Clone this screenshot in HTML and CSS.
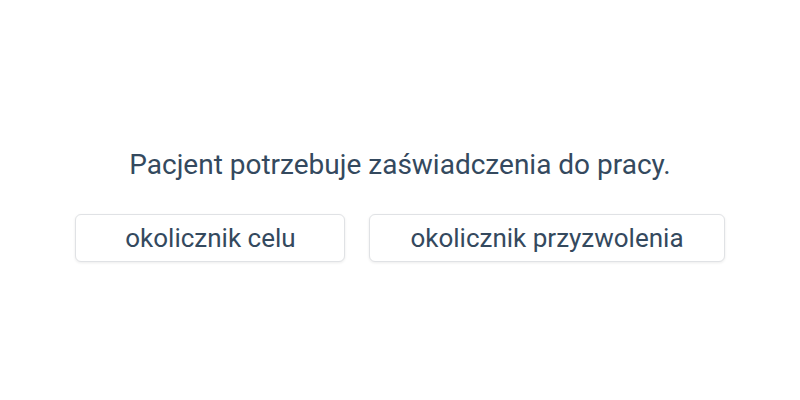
FILE: index.html
```html
<!DOCTYPE html>
<html lang="pl">
<head>
    <meta charset="UTF-8">
    <meta name="viewport" content="width=device-width, initial-scale=1.0">
    <title>Quiz</title>
    <link rel="stylesheet" href="styles.css">
</head>
<body>
    <div class="question">
        <p class="prompt">Pacjent potrzebuje zaświadczenia do pracy.</p>
        <div class="answers">
            <button class="answer answer-short">okolicznik celu</button>
            <button class="answer">okolicznik przyzwolenia</button>
        </div>
    </div>
</body>
</html>
```

FILE: styles.css
```css
body {
    margin: 0;
    padding: 0;
    height: 400px;
    background: #fff;
    color: #34495e;
    font-family: 'Roboto', sans-serif;
}

.question {
    padding-top: 146px;
    display: flex;
    flex-direction: column;
    align-items: center;
}

.prompt {
    margin: 0;
    font-size: 28px;
    line-height: 38px;
}

.answers {
    margin-top: 30px;
    display: flex;
    gap: 24px;
}

.answer {
    height: 48px;
    padding: 0 40px;
    background: #fff;
    border: 1px solid #e0e2e5;
    border-radius: 6px;
    box-shadow: 0 1px 3px rgba(0, 0, 0, 0.08);
    color: #34495e;
    font-family: 'Roboto', sans-serif;
    font-size: 26px;
    cursor: pointer;
}

.answer-short {
    width: 270px;
}
```
